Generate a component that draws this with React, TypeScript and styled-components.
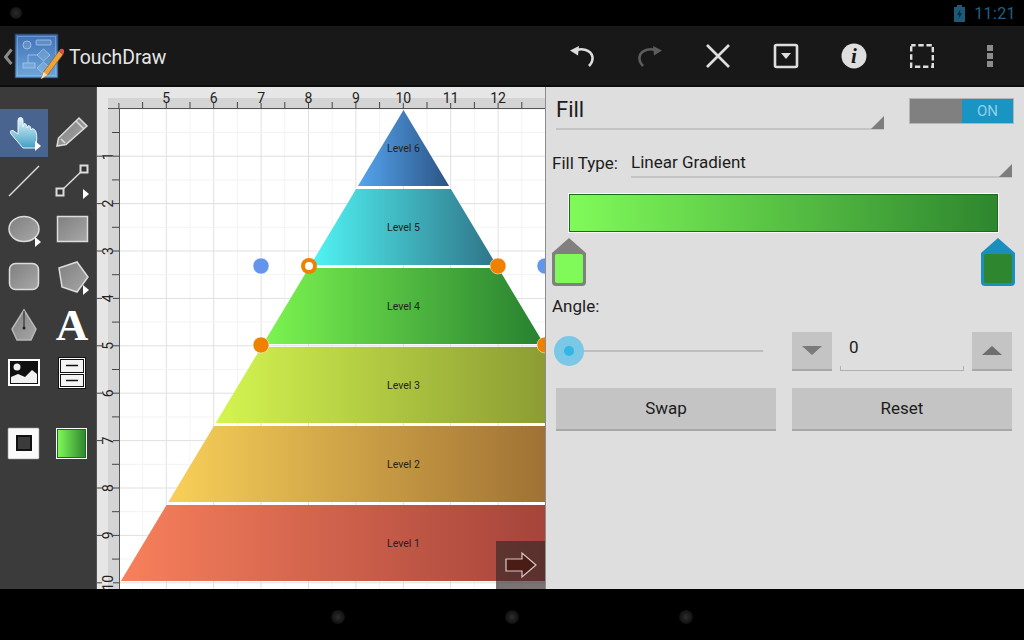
import React from 'react';
import styled, { createGlobalStyle } from 'styled-components';

const GlobalStyle = createGlobalStyle`
  html, body {
    margin: 0;
    padding: 0;
    background: #000;
    font-family: Roboto, "Liberation Sans", sans-serif;
  }
`;

const Screen = styled.div`
  width: 1024px;
  height: 640px;
  display: flex;
  flex-direction: column;
  overflow: hidden;
  background: #000;
`;

const StatusBar = styled.div`
  height: 26px;
  flex: none;
  display: flex;
  align-items: center;
  padding: 0 8px 0 10px;
  background: #000;
`;

const Dot = styled.span`
  width: 12px;
  height: 12px;
  border-radius: 50%;
  background: radial-gradient(circle, #2a2a2a 0%, #1a1a1a 55%, #0a0a0a 100%);
`;

const StatusRight = styled.div`
  margin-left: auto;
  display: flex;
  align-items: center;
  gap: 9px;
`;

const Clock = styled.span`
  font-size: 16px;
  letter-spacing: 0.4px;
  color: #1f6282;
`;

const ActionBar = styled.div`
  height: 59px;
  flex: none;
  display: flex;
  align-items: center;
  background: #181818;
  border-bottom: 2px solid #0c0c0c;
`;

const Brand = styled.div`
  display: flex;
  align-items: center;
  padding-left: 4px;
  margin-right: auto;
`;

const AppName = styled.span`
  margin-left: 5px;
  padding-top: 3px;
  font-size: 19.4px;
  color: #e6e6e6;
`;

const ActionButton = styled.div`
  width: 68px;
  height: 59px;
  display: flex;
  align-items: center;
  justify-content: center;
`;

const Main = styled.div`
  flex: 1;
  min-height: 0;
  display: flex;
`;

const Palette = styled.div`
  width: 96px;
  flex: none;
  padding-top: 22px;
  background: #3b3b3b;
  border-right: 1px solid #555;
`;

const ToolGrid = styled.div<{ $gap?: number }>`
  display: grid;
  grid-template-columns: 48px 48px;
  grid-auto-rows: 48px;
  margin-top: ${(props) => props.$gap ?? 0}px;
`;

const Tool = styled.div<{ $active?: boolean }>`
  position: relative;
  background: ${(props) => (props.$active ? '#4a6490' : 'transparent')};

  svg {
    display: block;
  }
`;

const MoreBadge = styled.span`
  position: absolute;
  left: 35px;
  top: 32px;
  border-left: 6px solid #fff;
  border-top: 5px solid transparent;
  border-bottom: 5px solid transparent;
`;

const LetterTool = styled.span`
  display: block;
  text-align: center;
  font-family: "Liberation Serif", serif;
  font-weight: 700;
  font-size: 45px;
  line-height: 48px;
  color: #fff;
`;

const CanvasArea = styled.div`
  position: relative;
  width: 448px;
  flex: none;
  background: #fff;
  overflow: hidden;

  svg {
    display: block;
  }
`;

const NextButton = styled.div`
  position: absolute;
  right: 0;
  bottom: 0;
  width: 49px;
  height: 48px;
  display: flex;
  align-items: center;
  justify-content: center;
  background: rgba(50, 40, 40, 0.65);
`;

const Panel = styled.div`
  flex: 1;
  display: flex;
  flex-direction: column;
  padding-left: 6px;
  background: #dedede;
  border-left: 1px solid #8c8c8c;
  color: #1c1c1c;
`;

const HeaderRow = styled.div`
  height: 44px;
  display: flex;
  align-items: flex-start;
  padding-left: 4px;
`;

const Spinner = styled.div<{ $width: number; $height: number }>`
  position: relative;
  width: ${(props) => props.$width}px;
  height: ${(props) => props.$height}px;
  border-bottom: 2px solid #c4c4c4;
  box-sizing: border-box;

  &::after {
    content: '';
    position: absolute;
    right: 0;
    bottom: -1px;
    border-left: 13px solid transparent;
    border-bottom: 13px solid #7d7d7d;
  }
`;

const FillTitle = styled.span`
  display: block;
  font-size: 22px;
  line-height: 24px;
  padding-top: 11px;
`;

const Toggle = styled.div`
  margin: 11px 0 0 25px;
  width: 105px;
  height: 26px;
  box-sizing: border-box;
  display: flex;
  justify-content: flex-end;
  background: #808080;
  border: 1px solid #b4b4b4;
`;

const ToggleOn = styled.span`
  width: 51px;
  text-align: center;
  font-size: 15px;
  line-height: 25px;
  color: #8fd0ea;
  background: #1a94c2;
`;

const FillTypeRow = styled.div`
  height: 47px;
  display: flex;
  align-items: flex-start;
`;

const FieldLabel = styled.span`
  font-size: 17px;
  line-height: 20px;
  padding-top: 22px;
  width: 79px;
  flex: none;
`;

const SpinnerValue = styled.span`
  display: block;
  font-size: 17px;
  line-height: 20px;
  padding-top: 21px;
`;

const GradientBar = styled.div`
  margin: 16px 0 0 17px;
  width: 429px;
  height: 38px;
  box-sizing: border-box;
  background: linear-gradient(90deg, #80fa59, #2e862e);
  border: 1px solid #157015;
  outline: 1px solid #fff;
`;

const StopsRow = styled.div`
  display: flex;
  justify-content: space-between;
  width: 463px;
  margin-top: 6px;

  svg {
    display: block;
  }
`;

const AngleLabel = styled.div`
  font-size: 17px;
  line-height: 20px;
  margin-top: 10px;
`;

const AngleRow = styled.div`
  display: flex;
  align-items: flex-start;
  margin-top: 16px;
`;

const Slider = styled.div`
  position: relative;
  width: 209px;
  height: 39px;
  margin: 0 29px 0 2px;

  &::before {
    content: '';
    position: absolute;
    left: 0;
    right: 0;
    top: 18px;
    height: 2px;
    background: #bdbdbd;
  }
`;

const SliderThumb = styled.span`
  position: absolute;
  left: 0;
  top: 4px;
  width: 30px;
  height: 30px;
  border-radius: 50%;
  background: #7ac7e6;

  &::after {
    content: '';
    position: absolute;
    left: 10px;
    top: 10px;
    width: 10px;
    height: 10px;
    border-radius: 50%;
    background: #33b5e5;
  }
`;

const StepButton = styled.div`
  width: 40px;
  height: 39px;
  box-sizing: border-box;
  display: flex;
  align-items: center;
  justify-content: center;
  background: #c4c4c4;
  border-bottom: 2px solid #a8a8a8;
`;

const Arrow = styled.span<{ $up?: boolean }>`
  border-left: 10px solid transparent;
  border-right: 10px solid transparent;
  ${(props) =>
    props.$up
      ? 'border-bottom: 9px solid #6e6e6e;'
      : 'border-top: 9px solid #7a7a7a;'}
`;

const ValueField = styled.div`
  position: relative;
  width: 124px;
  height: 39px;
  box-sizing: border-box;
  margin: 0 8px;
  padding-left: 9px;
  font-size: 17px;
  line-height: 31px;
  border-bottom: 1px solid #b0b0b0;

  &::before,
  &::after {
    content: '';
    position: absolute;
    bottom: 0;
    width: 1px;
    height: 4px;
    background: #b0b0b0;
  }
  &::before {
    left: 0;
  }
  &::after {
    right: 0;
  }
`;

const ButtonsRow = styled.div`
  display: flex;
  gap: 16px;
  margin: 17px 0 0 4px;
`;

const PanelButton = styled.div`
  width: 220px;
  height: 43px;
  box-sizing: border-box;
  text-align: center;
  font-size: 17px;
  line-height: 41px;
  background: #c4c4c4;
  border-bottom: 2px solid #a8a8a8;
`;

const NavBar = styled.div`
  height: 51px;
  flex: none;
  display: flex;
  align-items: center;
  justify-content: center;
  gap: 160px;
  padding-top: 5px;
  box-sizing: border-box;
  background: #000;
`;

const NavDot = styled(Dot)`
  width: 14px;
  height: 14px;
  background: radial-gradient(circle, #2e2e2e 0%, #1a1a1a 45%, #050505 100%);
`;

const X_UNIT = 47.4;
const xAt = (n: number) => -70.7 + X_UNIT * n;
const yAt = (n: number) => 108.8 + X_UNIT * n;
const APEX_X = 403.5;
const APEX_Y = 110;
const SLOPE = 0.6;

const LEVELS = [
  { name: 'Level 6', top: 110, bottom: 186, from: '#55a5f0', to: '#2c5484' },
  { name: 'Level 5', top: 189, bottom: 265, from: '#50f5f5', to: '#2f7488' },
  { name: 'Level 4', top: 268, bottom: 344, from: '#7cf550', to: '#278030' },
  { name: 'Level 3', top: 347, bottom: 423, from: '#d4f550', to: '#82902f' },
  { name: 'Level 2', top: 426, bottom: 502, from: '#f8d058', to: '#8a5a2c' },
  { name: 'Level 1', top: 505, bottom: 581, from: '#f8805c', to: '#8a3030' },
];

const HANDLES = [
  { x: 261, y: 266, color: '#6495ed' },
  { x: 545, y: 266, color: '#6495ed' },
  { x: 498, y: 266, color: '#f08000' },
  { x: 261, y: 345, color: '#f08000' },
  { x: 545, y: 345, color: '#f08000' },
];

function DrawingCanvas() {
  const columns = Array.from({ length: 22 }, (_, i) => 3 + i * 0.5);
  const rows = Array.from({ length: 21 }, (_, i) => i * 0.5);
  return (
    <svg width={448} height={502} viewBox="97 87 448 502" fontFamily="Roboto, sans-serif">
      <defs>
        {LEVELS.map((level) => {
          const half = (level.bottom - APEX_Y) * SLOPE;
          return (
            <linearGradient
              key={level.name}
              id={level.name.replace(' ', '')}
              gradientUnits="userSpaceOnUse"
              x1={APEX_X - half}
              x2={APEX_X + half}
              y1={0}
              y2={0}
            >
              <stop offset="0" stopColor={level.from} />
              <stop offset="1" stopColor={level.to} />
            </linearGradient>
          );
        })}
      </defs>

      {columns.map((n) => (
        <line
          key={n}
          x1={xAt(n)}
          x2={xAt(n)}
          y1={108}
          y2={589}
          stroke={Number.isInteger(n) ? '#e0e0e0' : '#f3f3f3'}
        />
      ))}
      {rows.map((n) => (
        <line
          key={n}
          x1={119}
          x2={545}
          y1={yAt(n)}
          y2={yAt(n)}
          stroke={Number.isInteger(n) ? '#e0e0e0' : '#f3f3f3'}
        />
      ))}

      <rect x={97} y={87} width={448} height={11} fill="#e6e6e6" />
      <rect x={97} y={87} width={11} height={502} fill="#e6e6e6" />
      <rect x={108} y={98} width={437} height={10} fill="#d4d4d4" />
      <rect x={108} y={98} width={11} height={491} fill="#d4d4d4" />
      <line x1={108} x2={545} y1={108.5} y2={108.5} stroke="#555" />
      <line x1={119.5} x2={119.5} y1={108} y2={589} stroke="#555" />

      {columns.map((n) =>
        Number.isInteger(n) ? (
          <g key={n}>
            <line x1={xAt(n)} x2={xAt(n)} y1={103} y2={108} stroke="#444" />
            {n >= 5 && n <= 12 && (
              <text x={xAt(n)} y={102.5} textAnchor="middle" fontSize={14} fill="#222">
                {n}
              </text>
            )}
          </g>
        ) : (
          <line key={n} x1={xAt(n)} x2={xAt(n)} y1={102} y2={108} stroke="#444" />
        ),
      )}
      {rows.map((n) =>
        n > 0 && Number.isInteger(n) ? (
          <g key={n}>
            <line x1={113} x2={119} y1={yAt(n)} y2={yAt(n)} stroke="#444" />
            <line x1={97} x2={102} y1={yAt(n)} y2={yAt(n)} stroke="#444" />
            <text
              transform={`translate(113 ${yAt(n)}) rotate(-90)`}
              textAnchor="middle"
              fontSize={14}
              fill="#222"
            >
              {n}
            </text>
          </g>
        ) : (
          n > 0 && <line key={n} x1={112} x2={119} y1={yAt(n)} y2={yAt(n)} stroke="#444" />
        ),
      )}

      {LEVELS.map((level) => {
        const topHalf = (level.top - APEX_Y) * SLOPE;
        const bottomHalf = (level.bottom - APEX_Y) * SLOPE;
        const points = [
          [APEX_X - topHalf, level.top],
          [APEX_X + topHalf, level.top],
          [APEX_X + bottomHalf, level.bottom],
          [APEX_X - bottomHalf, level.bottom],
        ]
          .map((p) => p.join(','))
          .join(' ');
        return (
          <g key={level.name}>
            <polygon points={points} fill={`url(#${level.name.replace(' ', '')})`} />
            <text
              x={APEX_X}
              y={(level.top + level.bottom) / 2 + 3.5}
              textAnchor="middle"
              fontSize={10.5}
              fill="#222"
            >
              {level.name}
            </text>
          </g>
        );
      })}

      {HANDLES.map((handle) => (
        <circle
          key={`${handle.x}-${handle.y}`}
          cx={handle.x}
          cy={handle.y}
          r={8}
          fill={handle.color}
          stroke="#fff"
          strokeOpacity={0.5}
        />
      ))}
      <circle cx={309} cy={266} r={6} fill="#fff" stroke="#f08000" strokeWidth={4} />
    </svg>
  );
}

function GrayFill() {
  return (
    <defs>
      <linearGradient id="toolGray" x1="0" y1="0" x2="1" y2="1">
        <stop offset="0" stopColor="#7f7f7f" />
        <stop offset="1" stopColor="#a8a8a8" />
      </linearGradient>
      <linearGradient id="handBlue" x1="0" y1="0" x2="0" y2="1">
        <stop offset="0" stopColor="#e6f6fa" />
        <stop offset="1" stopColor="#3f9fc6" />
      </linearGradient>
    </defs>
  );
}

function ToolIcon({ name }: { name: string }) {
  const shape = { fill: 'url(#toolGray)', stroke: '#dcdcdc', strokeWidth: 1.5 };
  return (
    <svg width={48} height={48} viewBox="0 0 48 48">
      <GrayFill />
      {name === 'hand' && (
        <path
          d="M18 11.5Q18 8.5 20.5 8.5Q23 8.5 23 11.5V18L24 14.5Q26.5 14.5 27 17.5V19L28.5 16.5Q31 17 31 20V21L32.5 19.5Q35 20 36 23Q38 29 35 39H23L11 25Q9 21 13 21.5L18 25Z"
          fill="url(#handBlue)"
          stroke="#eaf6fa"
        />
      )}
      {name === 'pencil' && (
        <g>
          <path d="M9 37L10.5 29L31 9L39 17L18 35.5Z" {...shape} />
          <path d="M28 12L36 20M13 30L17 34" stroke="#dcdcdc" strokeWidth={1.5} fill="none" />
        </g>
      )}
      {name === 'line' && <line x1={9} y1={39} x2={39} y2={9} stroke="#dcdcdc" strokeWidth={1.5} />}
      {name === 'connector' && (
        <g>
          <line x1={12} y1={35} x2={36} y2={12} stroke="#dcdcdc" strokeWidth={1.5} />
          <rect x={8.5} y={31.5} width={7} height={7} fill="#333" stroke="#dcdcdc" strokeWidth={2} />
          <rect x={32.5} y={8.5} width={7} height={7} fill="#333" stroke="#dcdcdc" strokeWidth={2} />
        </g>
      )}
      {name === 'ellipse' && <ellipse cx={24} cy={24} rx={15} ry={12.5} {...shape} />}
      {name === 'rect' && <rect x={9.5} y={11.5} width={30} height={25} {...shape} />}
      {name === 'rounded' && <rect x={9.5} y={10.5} width={29} height={26} rx={6} {...shape} />}
      {name === 'polygon' && <polygon points="11,15 29,9 40,24 29,39 14,34" {...shape} />}
      {name === 'pen' && (
        <g>
          <polygon points="24,9 36,28 31,39 17,39 12,28" {...shape} stroke="#b8b8b8" />
          <line x1={24} y1={10} x2={24} y2={27} stroke="#222" />
          <circle cx={24} cy={27} r={1.5} fill="#222" />
        </g>
      )}
      {name === 'image' && (
        <g>
          <rect x={9} y={11} width={30} height={25} fill="#111" stroke="#fff" strokeWidth={2} />
          <circle cx={17} cy={18} r={3.5} fill="#f0f0f0" />
          <path d="M11 34V28L18 25L25 28L32 21L37 25V34Z" fill="#f0f0f0" />
        </g>
      )}
      {name === 'cabinet' && (
        <g>
          <rect x={10.5} y={8.5} width={27} height={31} fill="#fff" stroke="#111" />
          <rect x={12.5} y={10.5} width={23} height={13} fill="#f4f4f4" stroke="#111" />
          <rect x={12.5} y={25.5} width={23} height={12} fill="#f4f4f4" stroke="#111" />
          <line x1={18} x2={30} y1={16.5} y2={16.5} stroke="#111" strokeWidth={1.5} />
          <line x1={18} x2={30} y1={31.5} y2={31.5} stroke="#111" strokeWidth={1.5} />
        </g>
      )}
    </svg>
  );
}

function SwatchIcon({ kind }: { kind: 'stroke' | 'fill' }) {
  return (
    <svg width={48} height={48} viewBox="0 0 48 48">
      <defs>
        <linearGradient id="swatchGreen" x1="0" x2="1" y1="0" y2="0">
          <stop offset="0" stopColor="#80fa59" />
          <stop offset="1" stopColor="#2e862e" />
        </linearGradient>
      </defs>
      {kind === 'stroke' ? (
        <g>
          <rect x={8} y={9} width={31} height={31} rx={1} fill="#fafafa" stroke="#9a9a9a" strokeWidth={0.6} />
          <rect x={17} y={17} width={14} height={14} fill="#3b3b3b" stroke="#111" strokeWidth={2} />
        </g>
      ) : (
        <g>
          <rect x={8} y={9} width={31} height={31} fill="#fff" />
          <rect x={9.5} y={10.5} width={28} height={28} fill="url(#swatchGreen)" stroke="#157015" />
        </g>
      )}
    </svg>
  );
}

function AppIcon() {
  return (
    <svg width={60} height={50} viewBox="0 0 60 50">
      <defs>
        <linearGradient id="blueprint" x1="0" y1="0" x2="0" y2="1">
          <stop offset="0" stopColor="#3f70b4" />
          <stop offset="1" stopColor="#6ea8dc" />
        </linearGradient>
      </defs>
      <path d="M7.5 18.5L1.5 26L7.5 33" fill="none" stroke="#8a8a8a" strokeWidth={3} />
      <rect x={11} y={3} width={43} height={44} fill="url(#blueprint)" stroke="#23324a" />
      <rect x={13.5} y={5.5} width={38} height={39} fill="none" stroke="#9cc0e6" strokeOpacity={0.45} />
      <g fill="#ffffff" fillOpacity={0.14} stroke="#a9c8ea" strokeOpacity={0.8} strokeWidth={1}>
        <circle cx={23} cy={14} r={4} />
        <rect x={32} y={9} width={15} height={5} rx={1} />
        <polygon points="39.5,18 46,24 39.5,30 33,24" />
        <rect x={19} y={32} width={12} height={5} />
        <polygon points="39.5,31 46,37 39.5,43 33,37" />
      </g>
      <path d="M33 24H24V32" fill="none" stroke="#a9c8ea" strokeOpacity={0.8} />
      <path d="M37 48L39.5 41L55 20L59 23.5L43.5 44Z" fill="#eea23a" stroke="#7a5520" strokeWidth={0.6} />
      <path d="M37 48L39.5 41L43.5 44Z" fill="#f2e0c0" />
      <path d="M55 20L56.5 18Q58.5 17 60 19Q60.5 21 59 23.5Z" fill="#d4524a" />
    </svg>
  );
}

function ActionIcon({ name }: { name: string }) {
  const stroke = '#dedede';
  return (
    <svg width={30} height={30} viewBox="0 0 30 30">
      {name === 'undo' && (
        <g>
          <path d="M7 10.5C13 6.5 24 8 25.5 16C26 20 24 23 22 25" fill="none" stroke={stroke} strokeWidth={2.6} />
          <path d="M3 9.5L12 5L11 14.5Z" fill={stroke} />
        </g>
      )}
      {name === 'redo' && (
        <g transform="matrix(-1 0 0 1 30 0)">
          <path d="M7 10.5C13 6.5 24 8 25.5 16C26 20 24 23 22 25" fill="none" stroke="#5c5c5c" strokeWidth={2.6} />
          <path d="M3 9.5L12 5L11 14.5Z" fill="#5c5c5c" />
        </g>
      )}
      {name === 'close' && <path d="M4 4L26 26M26 4L4 26" stroke={stroke} strokeWidth={2.6} fill="none" />}
      {name === 'menu' && (
        <g>
          <rect x={4} y={4} width={22} height={22} rx={1.5} fill="none" stroke={stroke} strokeWidth={2.6} />
          <path d="M10 12H20L15 18Z" fill={stroke} />
        </g>
      )}
      {name === 'info' && (
        <g>
          <circle cx={15} cy={15} r={12.5} fill={stroke} />
          <text x={15} y={22} textAnchor="middle" fontFamily="Liberation Serif, serif" fontStyle="italic" fontWeight={700} fontSize={21} fill="#181818">
            i
          </text>
        </g>
      )}
      {name === 'select' && (
        <rect x={4.2} y={4.2} width={21.6} height={21.6} fill="none" stroke={stroke} strokeWidth={2.4} strokeDasharray="5.4 2.7" strokeDashoffset={1} />
      )}
      {name === 'more' && (
        <g fill="#8c8c8c">
          <rect x={12} y={4} width={6} height={6} />
          <rect x={12} y={12} width={6} height={6} />
          <rect x={12} y={20} width={6} height={6} />
        </g>
      )}
    </svg>
  );
}

function GradientStop({ edge, fill }: { edge: string; fill: string }) {
  return (
    <svg width={34} height={48} viewBox="0 0 34 48">
      <path d="M17 0L34 15V44Q34 48 30 48H4Q0 48 0 44V15Z" fill={edge} />
      <rect x={3} y={16} width={28} height={29} rx={2} fill={fill} />
    </svg>
  );
}

const TOOLS = [
  { name: 'hand', active: true, more: true },
  { name: 'pencil' },
  { name: 'line' },
  { name: 'connector', more: true },
  { name: 'ellipse', more: true },
  { name: 'rect' },
  { name: 'rounded' },
  { name: 'polygon', more: true },
  { name: 'pen' },
  { name: 'letter' },
  { name: 'image' },
  { name: 'cabinet' },
];

const ACTIONS = ['undo', 'redo', 'close', 'menu', 'info', 'select', 'more'];

export default function App() {
  return (
    <Screen>
      <GlobalStyle />
      <StatusBar>
        <Dot />
        <StatusRight>
          <svg width={11} height={17} viewBox="0 0 11 17">
            <path d="M3 0H8V2H11V17H0V2H3Z" fill="#1d5a78" />
            <path d="M6.5 4L3 10H5.2L4.5 14L8 8H5.8Z" fill="#0a2a3a" />
          </svg>
          <Clock>11:21</Clock>
        </StatusRight>
      </StatusBar>

      <ActionBar>
        <Brand>
          <AppIcon />
          <AppName>TouchDraw</AppName>
        </Brand>
        {ACTIONS.map((name) => (
          <ActionButton key={name}>
            <ActionIcon name={name} />
          </ActionButton>
        ))}
      </ActionBar>

      <Main>
        <Palette>
          <ToolGrid>
            {TOOLS.map((tool) => (
              <Tool key={tool.name} $active={tool.active}>
                {tool.name === 'letter' ? <LetterTool>A</LetterTool> : <ToolIcon name={tool.name} />}
                {tool.more && <MoreBadge />}
              </Tool>
            ))}
          </ToolGrid>
          <ToolGrid $gap={22}>
            <Tool>
              <SwatchIcon kind="stroke" />
            </Tool>
            <Tool>
              <SwatchIcon kind="fill" />
            </Tool>
          </ToolGrid>
        </Palette>

        <CanvasArea>
          <DrawingCanvas />
          <NextButton>
            <svg width={34} height={28} viewBox="0 0 34 28">
              <path d="M2 8H18V2L32 14L18 26V20H2Z" fill="#4a1c16" stroke="#d8c8c4" strokeWidth={1.2} />
            </svg>
          </NextButton>
        </CanvasArea>

        <Panel>
          <HeaderRow>
            <Spinner $width={328} $height={43}>
              <FillTitle>Fill</FillTitle>
            </Spinner>
            <Toggle>
              <ToggleOn>ON</ToggleOn>
            </Toggle>
          </HeaderRow>

          <FillTypeRow>
            <FieldLabel>Fill Type:</FieldLabel>
            <Spinner $width={381} $height={47}>
              <SpinnerValue>Linear Gradient</SpinnerValue>
            </Spinner>
          </FillTypeRow>

          <GradientBar />

          <StopsRow>
            <GradientStop edge="#808080" fill="#80fa59" />
            <GradientStop edge="#1a8fbd" fill="#2e862e" />
          </StopsRow>

          <AngleLabel>Angle:</AngleLabel>

          <AngleRow>
            <Slider>
              <SliderThumb />
            </Slider>
            <StepButton>
              <Arrow />
            </StepButton>
            <ValueField>0</ValueField>
            <StepButton>
              <Arrow $up />
            </StepButton>
          </AngleRow>

          <ButtonsRow>
            <PanelButton>Swap</PanelButton>
            <PanelButton>Reset</PanelButton>
          </ButtonsRow>
        </Panel>
      </Main>

      <NavBar>
        <NavDot />
        <NavDot />
        <NavDot />
      </NavBar>
    </Screen>
  );
}
